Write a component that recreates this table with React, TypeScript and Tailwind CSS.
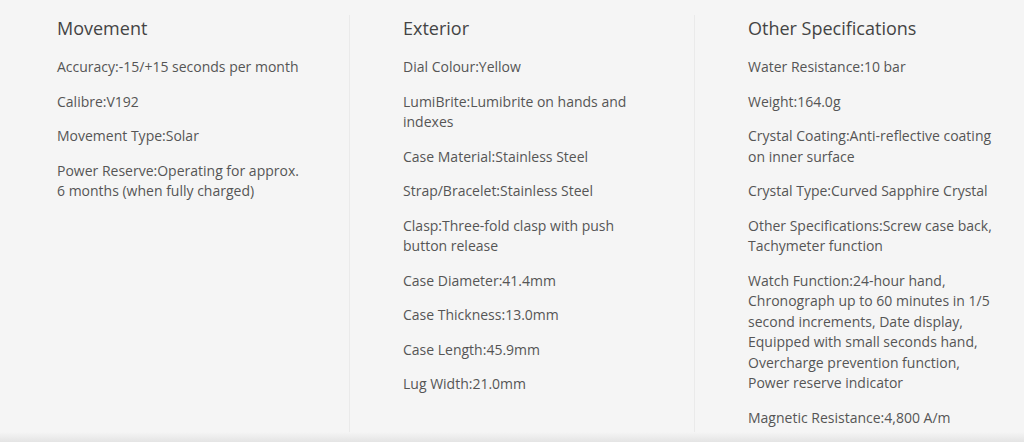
const sections: { title: string; items: string[] }[] = [
  {
    title: 'Movement',
    items: [
      'Accuracy:-15/+15 seconds per month',
      'Calibre:V192',
      'Movement Type:Solar',
      'Power Reserve:Operating for approx. 6 months (when fully charged)',
    ],
  },
  {
    title: 'Exterior',
    items: [
      'Dial Colour:Yellow',
      'LumiBrite:Lumibrite on hands and indexes',
      'Case Material:Stainless Steel',
      'Strap/Bracelet:Stainless Steel',
      'Clasp:Three-fold clasp with push button release',
      'Case Diameter:41.4mm',
      'Case Thickness:13.0mm',
      'Case Length:45.9mm',
      'Lug Width:21.0mm',
    ],
  },
  {
    title: 'Other Specifications',
    items: [
      'Water Resistance:10 bar',
      'Weight:164.0g',
      'Crystal Coating:Anti-reflective coating on inner surface',
      'Crystal Type:Curved Sapphire Crystal',
      'Other Specifications:Screw case back, Tachymeter function',
      'Watch Function:24-hour hand, Chronograph up to 60 minutes in 1/5 second increments, Date display, Equipped with small seconds hand, Overcharge prevention function, Power reserve indicator',
      'Magnetic Resistance:4,800 A/m',
    ],
  },
];

export default function App() {
  return (
    <div className="h-[442px] w-[1024px] overflow-hidden bg-[#f5f5f5] flex flex-col font-['Open_Sans',sans-serif]">
      <div className="flex pl-[4px] pt-[15px] h-[432px]">
        {sections.map((s, i) => (
          <div
            key={s.title}
            className={`w-[345px] shrink-0 pl-[53px] pt-[1px] ${i > 0 ? 'border-l border-[#eaeaea]' : ''}`}
          >
            <h3 className="text-[18px] leading-[24px] text-[#444]">{s.title}</h3>
            <ul className="mt-[17px] w-[250px]">
              {s.items.map((item) => (
                <li key={item} className="text-[14px] leading-[20.5px] text-[#555] mb-[14px]">
                  {item}
                </li>
              ))}
            </ul>
          </div>
        ))}
      </div>
      <div className="h-[10px] bg-gradient-to-b from-[#f5f5f5] to-[#e4e4e4]" />
    </div>
  );
}
